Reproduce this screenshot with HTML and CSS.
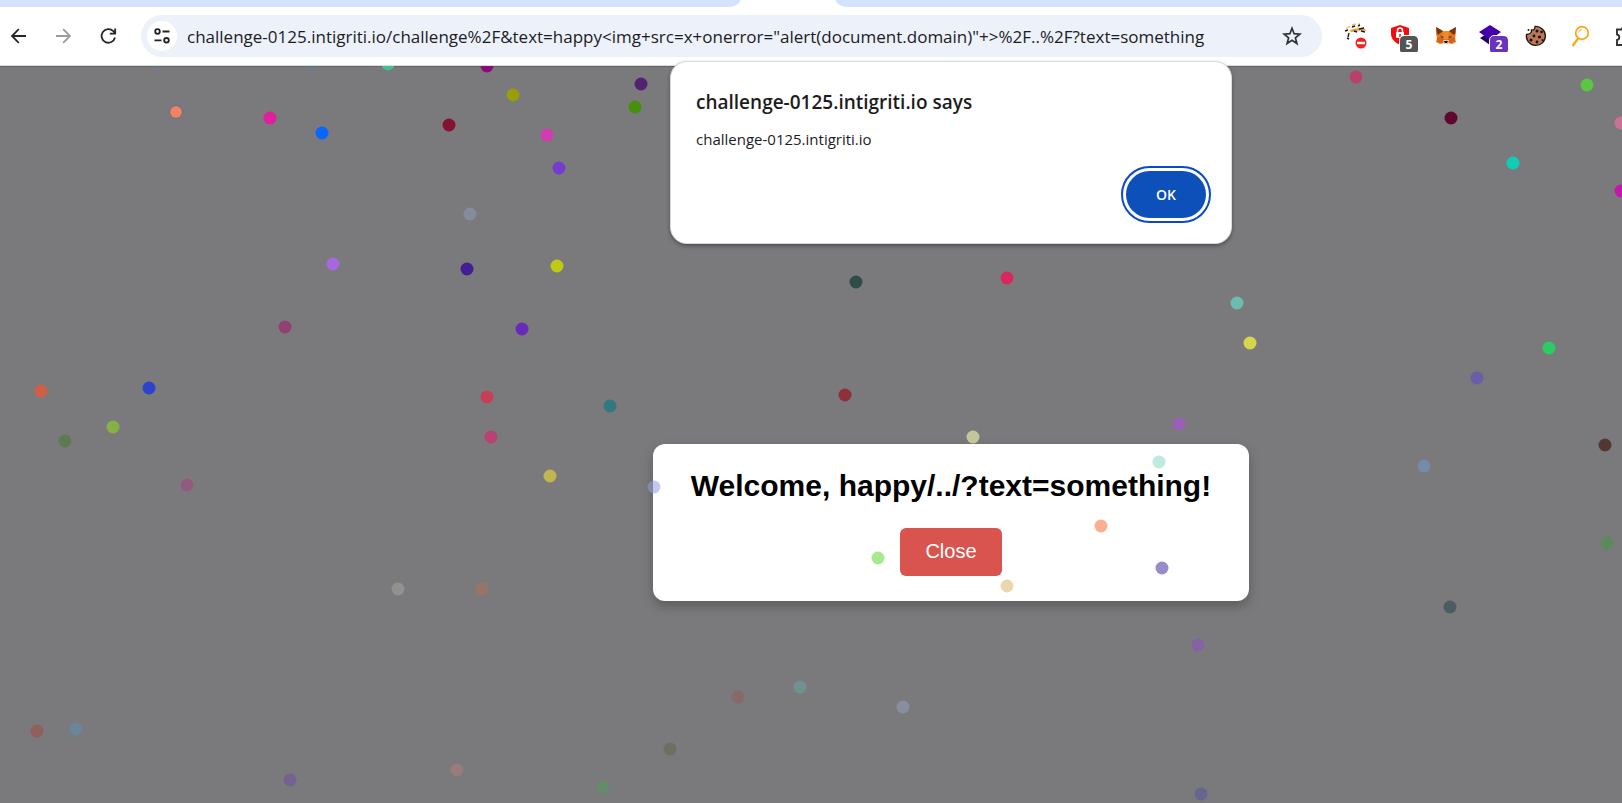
FILE: index.html
```html
<!DOCTYPE html>
<html lang="en">
<head>
<meta charset="utf-8">
<title>challenge-0125.intigriti.io</title>
<link rel="stylesheet" href="styles.css">
</head>
<body>
<header class="chrome">
  <div class="tabstrip"><span class="strip-left"></span><span class="strip-right"></span></div>
  <div class="toolbar">
    <nav class="nav">
      <button class="icon-button" type="button" aria-label="Back"><svg width="20" height="20" viewBox="0 0 20 20" fill="none" stroke="#252729" stroke-width="1.8"><path d="M17 10H3.500M9.800 3.200L3 10l6.800 6.800"/></svg></button>
      <button class="icon-button" type="button" aria-label="Forward"><svg width="20" height="20" viewBox="0 0 20 20" fill="none" stroke="#9c9d9e" stroke-width="1.8"><path d="M2 10H15.500M9.200 3.200L16 10l-6.800 6.800"/></svg></button>
      <button class="icon-button" type="button" aria-label="Reload"><svg width="20" height="20" viewBox="0 0 20 20" fill="none" stroke="#252729" stroke-width="1.8"><path d="M16 11.500A6.800 6.800 0 1 1 14.300 5.200L16 7M16.200 2.500V7.600H10.800"/></svg></button>
    </nav>
    <form class="address">
      <button class="site-info" type="button" aria-label="View site information"><svg width="18" height="18" viewBox="0 0 18 18" fill="none" stroke="#202124" stroke-width="1.800"><circle cx="4.500" cy="4.500" r="2.300"/><path d="M9.500 4.500h7M1.500 13.300h7"/><circle cx="13.500" cy="13.300" r="2.300"/></svg></button>
      <input class="url" type="text" aria-label="Address" value="challenge-0125.intigriti.io/challenge%2F&amp;text=happy&lt;img+src=x+onerror=&quot;alert(document.domain)&quot;+&gt;%2F..%2F?text=something">
      <button class="star" type="button" aria-label="Bookmark"><svg width="20" height="20" viewBox="0 0 20 20" fill="none" stroke="#303234" stroke-width="1.700"><path d="M10 2.300l2.100 5.400 5.800.4-4.500 3.700 1.500 5.700-4.900-3.200-4.900 3.200 1.500-5.700-4.500-3.700 5.800-.4z"/></svg></button>
    </form>
    <div class="extensions">
      <button class="ext" type="button" aria-label="Blocked extension"><svg width="28" height="30" viewBox="-2 -1 28 30" fill="none"><path d="M2 7l4-3M8 3l4-1M15 1v3" stroke="#f4c266" stroke-width="1.500"/><path d="M6 8q4-2 8-1l-2-3 5 3 3-2v3l-9 2z" fill="#cbd0d5"/><path d="M5 9q8-4 16-2l1 2q-8-2-14 1z" fill="#f39a17"/><path d="M1 9l3-1M8 5l3-1M14 4l2-1M15 7l5-1M5 11l-1 4M3 16l2 1M10 9l3 1M17 9l4 1" stroke="#1b1b1b" stroke-width="1.400"/><circle cx="17" cy="21" r="5.500" fill="#f32222"/><path d="M13 21h8" stroke="#fff" stroke-width="2.400"/></svg></button>
      <button class="ext" type="button" aria-label="Shield, 5"><svg width="24" height="24" viewBox="0 0 24 24"><path d="M11 1l9 3v6c0 5-4 8.500-9 11-5-2.500-9-6-9-11V4z" fill="#f40b0b"/><rect x="7" y="8" width="8" height="6" rx="1" fill="#fff"/><path d="M8.500 9V6.500a2.500 2.500 0 0 1 5 0V9" fill="none" stroke="#fff" stroke-width="1.500"/><path d="M11 10v3" stroke="#f40b0b" stroke-width="1.400"/></svg><span class="badge">5</span></button>
      <button class="ext" type="button" aria-label="Fox wallet"><svg width="22" height="22" viewBox="0 0 22 22"><path d="M1 2l7 4h6l7-4v6l-1 5 1 4-4 2-4-1-2 1-2-1-4 1-4-2 1-4-1-5z" fill="#e9771c"/><path d="M1 2l7 4-5 4-1-2zM21 2l-7 4 5 4 1-2z" fill="#713817"/><path d="M8 6h6l-1 8H9z" fill="#f28b24"/><path d="M2 13l5-1 2 3-2 3-4-1zM20 13l-5-1-2 3 2 3 4-1z" fill="#d4611c"/><path d="M5 10.500l4 1.500-2 1zM17 10.500L13 12l2 1z" fill="#31475d"/><path d="M8 15h6l-1 4H9z" fill="#d5c6b7"/><path d="M9 16h4l-1 2h-2z" fill="#161616"/></svg></button>
      <button class="ext" type="button" aria-label="Layers, 2"><svg width="24" height="24" viewBox="0 0 24 24"><path d="M1 14l10-6 10 6-10 7z" fill="#210066"/><path d="M11 1l11 7-11 8L0 8z" fill="#4300aa"/></svg><span class="badge badge-violet">2</span></button>
      <button class="ext" type="button" aria-label="Cookies"><svg width="22" height="22" viewBox="0 0 22 22"><path d="M10 1.500q0 4-3.500 3.500.5 4-5 4.500a9.500 9.500 0 1 0 8.500-8z" fill="#bc7959" stroke="#25150f" stroke-width="1.300"/><circle cx="3.500" cy="5" r="1" fill="#352018"/><g fill="#170e0b"><circle cx="12" cy="6" r="1.500"/><circle cx="16.500" cy="7" r="1.300"/><circle cx="9" cy="11" r="1.400"/><circle cx="14.500" cy="12" r="1.600"/><circle cx="6" cy="15" r="1.500"/><circle cx="12" cy="17" r="1.400"/><circle cx="17.500" cy="15" r="1"/></g></svg></button>
      <button class="ext" type="button" aria-label="Search"><svg width="22" height="22" viewBox="0 0 22 22" fill="none" stroke="#faa819"><circle cx="12" cy="8" r="6.300" stroke-width="1.800"/><path d="M8.500 7.500A4 4 0 0 1 12 4.500" stroke-width="1"/><path d="M8.500 13l-6 8" stroke-width="2.400"/></svg></button>
      <button class="ext" type="button" aria-label="Extensions"><svg width="22" height="22" viewBox="0 0 22 22" fill="none" stroke="#303234" stroke-width="1.900"><path d="M2 4.500h5a2.500 2.500 0 0 1 5 0h5v5a2.500 2.500 0 0 1 0 5V20H2v-5a2.800 2.800 0 0 0 0-5.500z"/></svg></button>
    </div>
  </div>
</header>

<main class="page">
  <section class="welcome" aria-labelledby="welcome-title">
    <h1 class="welcome-title" id="welcome-title">Welcome, happy/../?text=something!</h1>
    <button class="close" type="button">Close</button>
  </section>
  <svg class="confetti" aria-hidden="true"></svg>
</main>

<div class="alert-layer">
  <div class="alert" role="alertdialog" aria-labelledby="alert-title" aria-describedby="alert-text">
    <h2 class="alert-title" id="alert-title">challenge-0125.intigriti.io says</h2>
    <p class="alert-text" id="alert-text">challenge-0125.intigriti.io</p>
    <button class="ok" type="button">OK</button>
  </div>
</div>
<script src="confetti.js"></script>
</body>
</html>
```
FILE: confetti.js
```js
// Each piece: x, y (from the top of the page area), colour, optional opacity.
const pieces = [
  [156, -5, "#347aa0"], [312, -5, "#148898"], [388, -2, "#47bd93"],
  [270, 52, "#e01f9c"], [322, 67, "#0a66ff"],
  [333, 198, "#a768dd"], [285, 261, "#914171"], [41, 325, "#d05f48"],
  [149, 322, "#2d43cc"], [113, 361, "#87b046"], [65, 375, "#5d7a52"],
  [187, 419, "#935a80"], [487, 0, "#8c0a76"], [513, 29, "#999e06"],
  [641, 18, "#512370"], [635, 41, "#45900f"], [449, 59, "#84132f"],
  [547, 69, "#d13cb0"], [559, 102, "#753bcb"], [470, 148, "#858b9c"],
  [467, 203, "#421f92"], [557, 200, "#becb16"], [522, 263, "#662bbb"],
  [487, 331, "#c73f54"], [610, 340, "#317880"], [491, 371, "#b94176"],
  [550, 410, "#c0b551"], [654, 421, "#929ddc", 0.55],
  [1356, 11, "#b8406b"], [1587, 19, "#59c744"], [1451, 52, "#5f082f"],
  [1621, 57, "#cc7196"], [1513, 97, "#0fcdb5"], [1621, 125, "#c417b0"],
  [1237, 237, "#6bbdaf"], [1250, 277, "#d4d64d"], [1549, 282, "#2bcc62"],
  [1477, 312, "#6b5ea8"], [1605, 379, "#523831"],
  [856, 216, "#2f4d47"], [1007, 212, "#d8285f"], [845, 329, "#8e3039"],
  [1179, 358, "#9c5fb8"], [973, 371, "#c3c59a"], [1424, 400, "#758baa"],
  [1607, 477, "#5d8a5c"], [1450, 541, "#4d5c62"], [1198, 579, "#8462a4"],
  [1201, 728, "#65658f"], [800, 621, "#739090"], [738, 631, "#866b69"],
  [903, 641, "#888e9d"], [1159, 396, "#c0eadf"], [1101, 460, "#f9af90"],
  [878, 492, "#a6e98f"], [1162, 502, "#988dc8"], [1007, 520, "#ead7b0"],
  [398, 523, "#92918f"], [482, 523, "#9a7566"], [37, 665, "#8f605c"],
  [76, 663, "#69869b"], [290, 714, "#76608f"], [457, 704, "#987c7b"],
  [603, 721, "#648c6b"], [670, 683, "#6d7060"],
  [176, 46, "#14808c"], [176, 46, "#f67f66", 1, 6]
];
const canvas = document.querySelector(".confetti");
for (const [x, y, colour, opacity = 1, radius = 6.5] of pieces) {
  const dot = document.createElementNS("http://www.w3.org/2000/svg", "circle");
  dot.setAttribute("cx", x);
  dot.setAttribute("cy", y);
  dot.setAttribute("r", radius);
  dot.setAttribute("fill", colour);
  dot.setAttribute("fill-opacity", opacity);
  canvas.append(dot);
}
```
FILE: styles.css
```css
* { box-sizing: border-box; }
body {
  margin: 0;
  min-height: 100vh;
  display: flex;
  flex-direction: column;
  overflow: hidden;
  background: #7a7a7c;
  font-family: "Open Sans", "Noto Sans", sans-serif;
}
button { border: 0; padding: 0; background: none; font: inherit; }
svg { display: block; }

.chrome { background: #fff; border-bottom: 1px solid #d9dcd9; }
.tabstrip { display: flex; justify-content: space-between; gap: 96px; height: 7px; }
.strip-left, .strip-right { background: #d3e3fd; }
.strip-left { flex: 740; border-bottom-right-radius: 12px 7px; }
.strip-right { flex: 786; border-bottom-left-radius: 12px 7px; }
.toolbar { display: flex; align-items: center; height: 58px; padding: 0 0 0 9px; }
.nav { display: flex; gap: 25px; margin-right: 22px; }
.icon-button { flex: none; width: 20px; height: 20px; }
.address {
  flex: 1;
  display: flex;
  align-items: center;
  height: 42px;
  padding: 0 20px 0 6px;
  border-radius: 21px;
  background: #ecf1fa;
}
.site-info {
  display: grid;
  place-items: center;
  width: 30px;
  height: 30px;
  border-radius: 50%;
  background: #fff;
}
.url {
  flex: 1;
  min-width: 0;
  height: 30px;
  margin: 0 16px 0 10px;
  padding: 0;
  border: 0;
  outline: 0;
  background: none;
  color: #1c1c1e;
  font-family: "Open Sans", "Noto Sans", sans-serif;
  font-size: 17px;
}
.extensions { display: flex; gap: 17px; width: 300px; padding-left: 20px; overflow: hidden; }
.ext { position: relative; flex: none; display: grid; place-items: center; width: 28px; height: 32px; }
.badge {
  position: absolute;
  right: -3px;
  bottom: -2px;
  width: 18px;
  height: 18px;
  border-radius: 4px;
  outline: 1px solid #fff;
  background: #525554;
  color: #fff;
  font-size: 12px;
  font-weight: 700;
  line-height: 18px;
}
.badge-violet { background: #6833bd; }

.page {
  position: relative;
  flex: 1;
  display: flex;
  align-items: center;
  justify-content: center;
  padding: 176px 0 0 280px;
  box-shadow: inset 0 1px 0 #666;
}
.welcome {
  padding: 24px 38px 25px;
  border-radius: 12px;
  background: #fff;
  box-shadow: 0 5px 12px rgba(0, 0, 0, 0.25);
  text-align: center;
  font-family: "Liberation Sans", Arial, sans-serif;
}
.welcome-title { margin: 0 0 24px; font-size: 30px; line-height: 36px; color: #000; }
.close {
  display: block;
  height: 48px;
  margin: 0 auto;
  padding: 0 25px 2px;
  border-radius: 6px;
  background: #d9534f;
  color: #fff;
  font-size: 20px;
}
.confetti { position: absolute; inset: 0; width: 100%; height: 100%; pointer-events: none; }

.alert-layer {
  position: absolute;
  inset: 62px 0 auto 0;
  display: flex;
  justify-content: center;
  padding-left: 280px;
}
.alert {
  display: flex;
  flex-direction: column;
  width: 560px;
  padding: 26px 25px 25px 25px;
  border-radius: 16px;
  background: #fff;
  box-shadow: 0 0 0 1px #d9dbdd, 0 2px 5px rgba(0, 0, 0, 0.5);
  color: #1c1c1e;
}
.alert-title { margin: 0 0 11px; font-size: 19px; font-weight: 600; line-height: 28px; }
.alert-text { margin: 0 0 20px; font-size: 15px; line-height: 24px; }
.ok {
  align-self: flex-end;
  width: 80px;
  height: 47px;
  border-radius: 24px;
  outline: 2px solid #0b48cc;
  outline-offset: 3px;
  background: #0d50ba;
  color: #fff;
  font-size: 14px;
  font-weight: 600;
}
```
